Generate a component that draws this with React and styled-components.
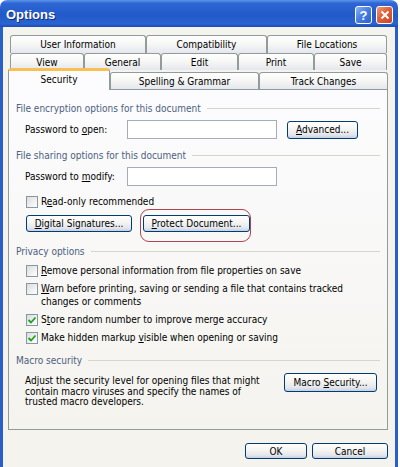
import React from 'react';
import styled, { createGlobalStyle, css } from 'styled-components';

const GlobalStyle = createGlobalStyle`
  html, body {
    margin: 0;
    padding: 0;
    background: #ffffff;
  }
  body {
    font-family: "DejaVu Sans Condensed", "DejaVu Sans", sans-serif;
    font-stretch: condensed;
    font-size: 10px;
    color: #000;
  }
`;

const Window = styled.div`
  width: 398px;
  height: 467px;
  overflow: hidden;
`;

const TitleBar = styled.div`
  height: 27px;
  display: flex;
  align-items: center;
  padding: 0 5px 0 6px;
  box-sizing: border-box;
  border-radius: 7px 7px 0 0;
  background: linear-gradient(#5d95ea 0%, #2e67d4 12%, #2259c9 55%, #2a63d2 88%, #1b4db3 100%);
`;

const Title = styled.span`
  font-family: "Liberation Sans", Arial, sans-serif;
  font-weight: bold;
  font-size: 13px;
  color: #fff;
  text-shadow: 1px 1px 0 #14307a;
  margin-top: 2px;
`;

const Caption = styled.div`
  margin-left: auto;
  display: flex;
  gap: 4px;
  margin-top: 3px;
`;

const CapButton = styled.div`
  width: 17px;
  height: 18px;
  box-sizing: border-box;
  border: 1px solid #fff;
  border-radius: 3px;
  display: flex;
  align-items: center;
  justify-content: center;
  color: #fff;
  font-family: "Liberation Sans", Arial, sans-serif;
  font-weight: bold;
  font-size: 13px;
  background: ${p =>
    p.$close
      ? 'linear-gradient(135deg, #f09a78 0%, #e0603a 45%, #c84420 100%)'
      : 'linear-gradient(135deg, #8cb4f5 0%, #4a7fe4 45%, #2d5fcf 100%)'};
`;

const Body = styled.div`
  height: 440px;
  box-sizing: border-box;
  border-left: 3px solid #2a5fca;
  border-right: 3px solid #2a5fca;
  background: #f4f3ee;
  padding: 8px 7px 0 5px;
`;

const TabRow = styled.div`
  display: flex;
  align-items: flex-end;
  height: ${p => p.$h}px;
  padding-left: ${p => p.$indent || 0}px;
  margin-top: ${p => p.$mt || 0}px;
`;

const Tab = styled.div`
  width: ${p => p.$w}px;
  height: 100%;
  box-sizing: border-box;
  border: 1px solid #919b9c;
  border-bottom: none;
  border-radius: 3px 3px 0 0;
  display: flex;
  align-items: center;
  justify-content: center;
  background: linear-gradient(#ffffff 0%, #f7f7f5 45%, #e4e7ee 100%);
  white-space: nowrap;

  ${p =>
    p.$short &&
    css`
      height: 17px;
    `}

  ${p =>
    p.$active &&
    css`
      height: 22px;
      margin-bottom: -1px;
      position: relative;
      z-index: 1;
      background: #fcfcfe;
      border-top: 3px solid #f8c050;
      padding-bottom: 2px;
    `}
`;

const Panel = styled.div`
  height: 341px;
  box-sizing: border-box;
  border: 1px solid #919b9c;
  background: linear-gradient(#fcfcfe, #f4f3ee);
  padding: 12px 7px 0 7px;
  display: flex;
  flex-direction: column;
`;

const Heading = styled.div`
  display: flex;
  align-items: center;
  height: 13px;
  line-height: 13px;
  margin-top: ${p => p.$mt || 0}px;
  color: #4c6080;
  white-space: nowrap;

  &::after {
    content: '';
    flex: 1;
    height: 1px;
    margin-left: 6px;
    background: #d6d5c8;
  }
`;

const FieldRow = styled.div`
  display: flex;
  align-items: center;
  margin-top: ${p => p.$mt}px;
  margin-left: 9px;
`;

const Label = styled.span`
  width: 102px;
`;

const TextBox = styled.div`
  width: 150px;
  height: 19px;
  box-sizing: border-box;
  border: 1px solid #a5acb5;
  background: #fff;
`;

const Button = styled.button`
  display: block;
  width: ${p => p.$w}px;
  height: ${p => p.$h || 17}px;
  line-height: ${p => (p.$h || 17) - 2}px;
  margin-left: ${p => p.$ml || 0}px;
  box-sizing: border-box;
  padding: 0;
  border: 1px solid #003c74;
  border-radius: 3px;
  font: inherit;
  color: #000;
  text-align: center;
  white-space: nowrap;
  background: linear-gradient(#ffffff 0%, #f4f4f1 45%, #e3e6ed 80%, #c6d0df 100%);
  flex-shrink: 0;
`;

const CheckRow = styled.div`
  display: flex;
  align-items: flex-start;
  margin-top: ${p => p.$mt}px;
  margin-left: 10px;
  line-height: 13px;
`;

const Box = styled.span`
  width: 12px;
  height: 12px;
  box-sizing: border-box;
  border: 1px solid #8796ab;
  background: linear-gradient(135deg, #dcdcd7, #ffffff);
  display: flex;
  align-items: center;
  justify-content: center;
  flex-shrink: 0;
  margin-top: 1px;
`;

const CheckText = styled.span`
  margin-left: 3px;
  white-space: nowrap;
`;

const ButtonRow = styled.div`
  display: flex;
  gap: 11px;
  margin-top: ${p => p.$mt}px;
  margin-left: 10px;
`;

const Marked = styled.div`
  position: relative;

  &::after {
    content: '';
    position: absolute;
    top: -6px;
    right: -1px;
    bottom: -10px;
    left: -3px;
    border: 1px solid #b04450;
    border-radius: 9px;
    pointer-events: none;
  }
`;

const MacroRow = styled.div`
  display: flex;
  align-items: flex-start;
  margin-top: ${p => p.$mt}px;
  margin-left: 9px;
`;

const MacroText = styled.p`
  margin: 3px 0 0;
  width: 250px;
  line-height: 10.5px;
`;

const Footer = styled.div`
  display: flex;
  justify-content: flex-end;
  gap: 5px;
  margin-top: 13px;
`;

const Check = ({ checked, children, mt }) => (
  <CheckRow $mt={mt}>
    <Box>
      {checked && (
        <svg width="10" height="10" viewBox="0 0 10 10">
          <path d="M1.5 5 L4 7.5 L8.5 2.5" fill="none" stroke="#21a121" strokeWidth="1.8" />
        </svg>
      )}
    </Box>
    <CheckText>{children}</CheckText>
  </CheckRow>
);

const row1 = [['User Information', 136], ['Compatibility', 121], ['File Locations', 120]];
const row2 = [['View', 74], ['General', 77], ['Edit', 77], ['Print', 76], ['Save', 73]];

export default function App() {
  return (
    <>
      <GlobalStyle />
      <Window>
        <TitleBar>
          <Title>Options</Title>
          <Caption>
            <CapButton>?</CapButton>
            <CapButton $close>
              <svg width="10" height="10" viewBox="0 0 10 10">
                <path d="M1.5 1.5 L8.5 8.5 M8.5 1.5 L1.5 8.5" stroke="#fff" strokeWidth="2" />
              </svg>
            </CapButton>
          </Caption>
        </TitleBar>
        <Body>
          <TabRow $h={18} $indent={2}>
            {row1.map(([t, w]) => (
              <Tab key={t} $w={w}>{t}</Tab>
            ))}
          </TabRow>
          <TabRow $h={17} $indent={2}>
            {row2.map(([t, w]) => (
              <Tab key={t} $w={w}>{t}</Tab>
            ))}
          </TabRow>
          <TabRow $h={21} $mt={-2}>
            <Tab $w={102} $active>Security</Tab>
            <Tab $w={149} $short>Spelling &amp; Grammar</Tab>
            <Tab $w={129} $short>Track Changes</Tab>
          </TabRow>
          <Panel>
            <Heading>File encryption options for this document</Heading>
            <FieldRow $mt={5}>
              <Label>Password to <u>o</u>pen:</Label>
              <TextBox />
              <Button $w={71} $h={18} $ml={10}><u>A</u>dvanced...</Button>
            </FieldRow>

            <Heading $mt={10}>File sharing options for this document</Heading>
            <FieldRow $mt={5}>
              <Label>Password to <u>m</u>odify:</Label>
              <TextBox />
            </FieldRow>
            <Check mt={9}>R<u>e</u>ad-only recommended</Check>
            <ButtonRow $mt={7}>
              <Button $w={106}><u>D</u>igital Signatures...</Button>
              <Marked>
                <Button $w={107}><u>P</u>rotect Document...</Button>
              </Marked>
            </ButtonRow>

            <Heading $mt={13}>Privacy options</Heading>
            <Check mt={6}><u>R</u>emove personal information from file properties on save</Check>
            <Check mt={5}>
              <u>W</u>arn before printing, saving or sending a file that contains tracked
              <br />
              changes or comments
            </Check>
            <Check mt={5} checked>S<u>t</u>ore random number to improve merge accuracy</Check>
            <Check mt={5} checked>Make hidden markup <u>v</u>isible when opening or saving</Check>

            <Heading $mt={10}>Macro security</Heading>
            <MacroRow $mt={6}>
              <MacroText>
                Adjust the security level for opening files that might contain macro viruses and specify the names of trusted macro developers.
              </MacroText>
              <Button $w={93} $h={19} $ml={9}>Macro <u>S</u>ecurity...</Button>
            </MacroRow>
          </Panel>
          <Footer>
            <Button $w={62} $h={16}>OK</Button>
            <Button $w={76} $h={16}>Cancel</Button>
          </Footer>
        </Body>
      </Window>
    </>
  );
}
